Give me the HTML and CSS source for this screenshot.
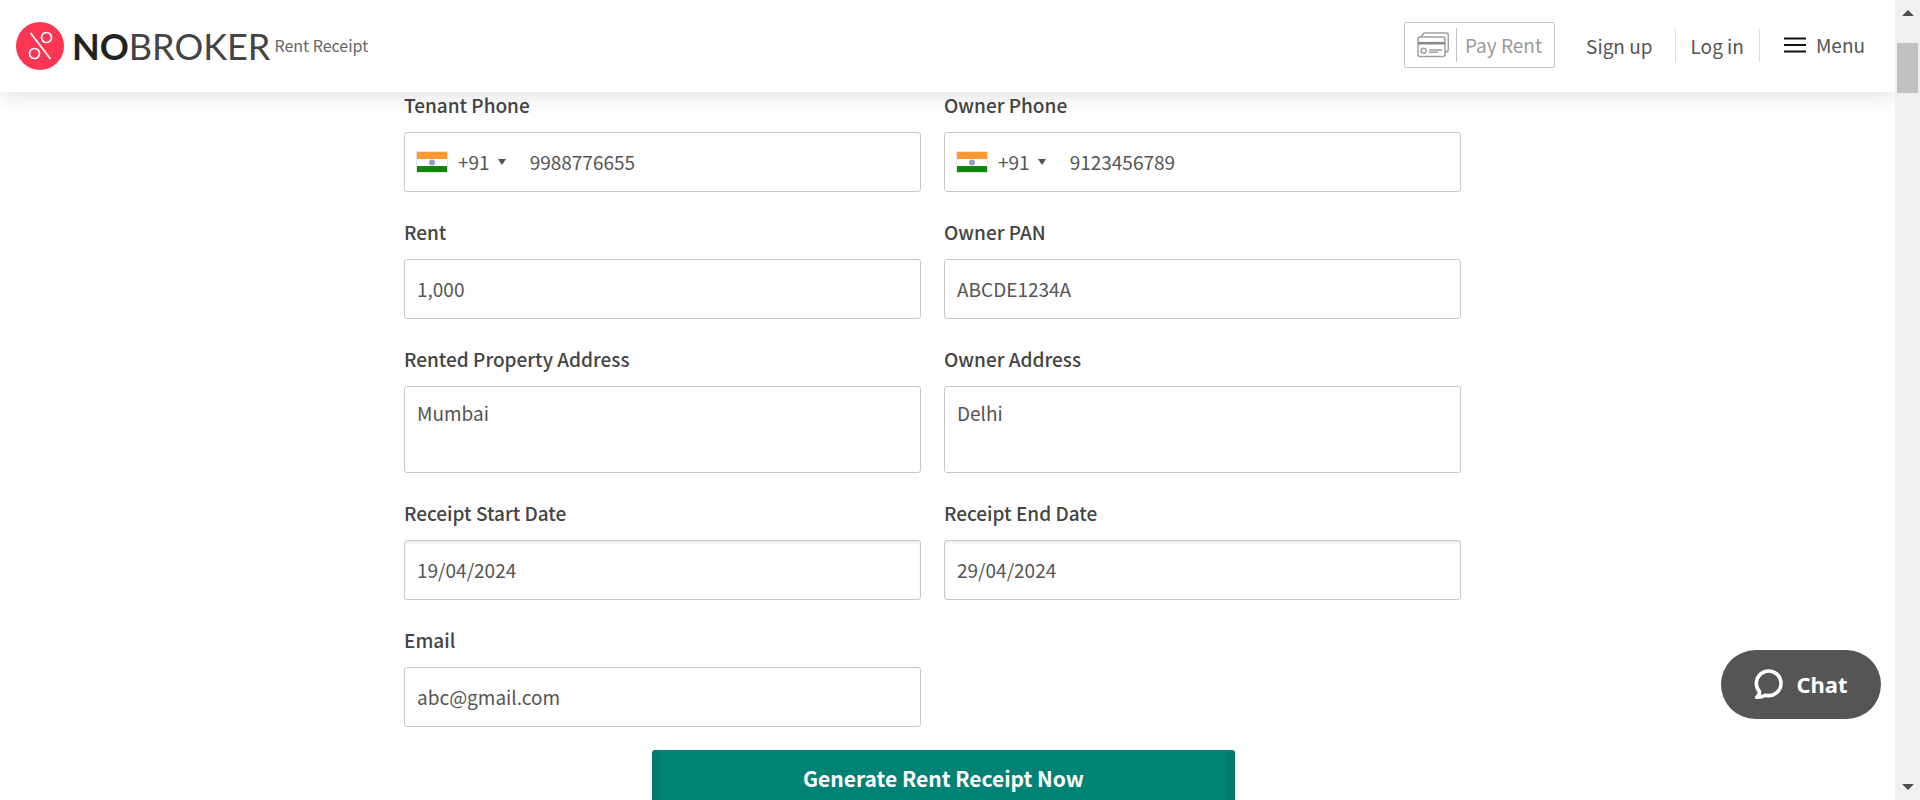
FILE: index.html
```html
<!DOCTYPE html>
<html lang="en">
<head>
<meta charset="utf-8">
<meta name="viewport" content="width=device-width, initial-scale=1">
<title>Rent Receipt</title>
<link rel="stylesheet" href="styles.css">
</head>
<body>
<div class="page">
  <header class="header">
    <a class="brand" href="#">
      <svg class="brand-mark" viewBox="0 0 48 48" aria-hidden="true">
        <circle cx="24" cy="24" r="24" fill="#fd3753"/>
        <g fill="none" stroke="#fff" stroke-width="1.7">
          <path d="M14.5 11 34.5 37"/>
          <circle cx="30.5" cy="15.500" r="5"/>
          <circle cx="18.500" cy="31.500" r="5"/>
        </g>
      </svg>
      <span class="brand-name"><b>NO</b>BROKER</span>
    </a>
    <span class="section-name">Rent Receipt</span>
    <nav class="nav">
      <a class="pay" href="#">
        <svg class="pay-icon" viewBox="0 0 32 26" fill="none" stroke="#a0a0a0" stroke-width="1.5" aria-hidden="true">
          <path d="M4 5 6.500 1.500Q7 1 8 1H29.500Q31.300 1 31.300 3V17.500Q31.300 20 28 20"/>
          <rect x="1" y="5" width="27" height="19.500" rx="2"/>
          <path d="M1 11.200H28" stroke="#888" stroke-width="2.600"/>
          <circle cx="6.500" cy="18.700" r="2.500"/>
          <path d="M12 18H25M12 20.300H21"/>
        </svg>
        <span class="pay-text">Pay Rent</span>
      </a>
      <a class="nav-link nav-signup" href="#">Sign up</a>
      <a class="nav-link nav-login" href="#">Log in</a>
      <button class="menu" type="button">
        <svg class="menu-icon" viewBox="0 0 22 16" aria-hidden="true"><path d="M0 1.500H22M0 8H22M0 14.500H22" stroke="#111" stroke-width="2"/></svg>
        Menu
      </button>
    </nav>
  </header>

  <main class="main">
    <form class="form">
      <div class="fields">
        <div class="field">
          <label class="label" for="tenant-phone">Tenant Phone</label>
          <div class="control phone">
            <button class="country" type="button" aria-label="Country code +91">
              <svg class="flag" viewBox="0 0 32 22" aria-hidden="true"><rect width="32" height="22" fill="#e4e4e4"/><path fill="#ff9933" d="M1 1h30v7H1z"/><path fill="#fff" d="M1 8h30v7H1z"/><path fill="#128807" d="M1 15h30v6H1z"/><circle cx="16" cy="11.500" r="3" fill="#8f9fcb"/></svg>
              <span>+91</span>
              <svg class="caret" viewBox="0 0 8 6" aria-hidden="true"><path fill="#555" d="M0 0h8L4 6z"/></svg>
            </button>
            <input class="phone-input" id="tenant-phone" type="tel" value="9988776655">
          </div>
        </div>
        <div class="field">
          <label class="label" for="owner-phone">Owner Phone</label>
          <div class="control phone">
            <button class="country" type="button" aria-label="Country code +91">
              <svg class="flag" viewBox="0 0 32 22" aria-hidden="true"><rect width="32" height="22" fill="#e4e4e4"/><path fill="#ff9933" d="M1 1h30v7H1z"/><path fill="#fff" d="M1 8h30v7H1z"/><path fill="#128807" d="M1 15h30v6H1z"/><circle cx="16" cy="11.500" r="3" fill="#8f9fcb"/></svg>
              <span>+91</span>
              <svg class="caret" viewBox="0 0 8 6" aria-hidden="true"><path fill="#555" d="M0 0h8L4 6z"/></svg>
            </button>
            <input class="phone-input" id="owner-phone" type="tel" value="9123456789">
          </div>
        </div>
        <div class="field">
          <label class="label" for="rent">Rent</label>
          <input class="control" id="rent" type="text" value="1,000">
        </div>
        <div class="field">
          <label class="label" for="pan">Owner PAN</label>
          <input class="control" id="pan" type="text" value="ABCDE1234A">
        </div>
        <div class="field">
          <label class="label" for="property-address">Rented Property Address</label>
          <textarea class="control area" id="property-address">Mumbai</textarea>
        </div>
        <div class="field">
          <label class="label" for="owner-address">Owner Address</label>
          <textarea class="control area" id="owner-address">Delhi</textarea>
        </div>
        <div class="field">
          <label class="label" for="start-date">Receipt Start Date</label>
          <input class="control date" id="start-date" type="text" value="19/04/2024">
        </div>
        <div class="field">
          <label class="label" for="end-date">Receipt End Date</label>
          <input class="control date" id="end-date" type="text" value="29/04/2024">
        </div>
        <div class="field">
          <label class="label" for="email">Email</label>
          <input class="control" id="email" type="email" value="abc@gmail.com">
        </div>
      </div>
      <div class="actions">
        <button class="submit" type="button">Generate Rent Receipt Now</button>
      </div>
    </form>
  </main>

  <button class="chat" type="button">
    <svg class="chat-icon" viewBox="0 0 30 32" fill="none" stroke="#fff" stroke-width="3.600" stroke-linejoin="round" aria-hidden="true"><path d="M5.500 23.500A12.300 12.300 0 1 1 11.500 27.200Q7 29.600 2.600 29.200 5.800 27 5.500 23.500Z"/></svg>
    Chat
  </button>
</div>
<div class="scrollbar" aria-hidden="true">
  <svg class="arrow" viewBox="0 0 12 6"><path fill="#505050" d="M0 6 6 0l6 6z"/></svg>
  <div class="track"><div class="thumb"></div></div>
  <svg class="arrow" viewBox="0 0 12 6"><path fill="#505050" d="M0 0h12L6 6z"/></svg>
</div>
</body>
</html>
```
FILE: styles.css
```css
* {
  box-sizing: border-box;
}

body {
  margin: 0;
  display: flex;
  height: 100vh;
  overflow: hidden;
  background: #fff;
  color: #555;
  font: 19px/28px "Noto Sans CJK SC", "Noto Sans", sans-serif;
}

button,
input,
textarea {
  font: inherit;
  color: inherit;
}

a {
  color: inherit;
  text-decoration: none;
}

svg {
  display: block;
  flex: none;
}

.page {
  position: relative;
  flex: 1;
  min-width: 0;
  overflow: hidden;
}

/* Header */
.header {
  position: relative;
  z-index: 2;
  display: flex;
  align-items: center;
  height: 92px;
  padding: 0 30px 0 16px;
  background: #fff;
  box-shadow: 0 4px 20px rgba(0, 0, 0, 0.12);
}

.brand {
  display: flex;
  align-items: center;
  gap: 8px;
}

.brand-mark {
  width: 48px;
  height: 48px;
}

.brand-name {
  color: #444;
  font: 36px/48px Lato, sans-serif;
}

.brand-name b {
  color: #222;
  font-weight: 700;
}

.section-name {
  margin-left: 4px;
  padding-bottom: 3px;
  font-size: 16px;
  color: #666;
}

.nav {
  display: flex;
  align-items: center;
  margin-left: auto;
  padding-bottom: 2px;
}

.pay {
  display: flex;
  align-items: center;
  gap: 7px;
  height: 46px;
  padding: 0 12px;
  border: 1px solid #c4c4c4;
  border-radius: 2px;
  color: #999;
}

.pay-icon {
  width: 32px;
  height: 26px;
}

.pay-text {
  padding-left: 8px;
  border-left: 1px solid #c4c4c4;
  line-height: 34px;
}

.nav-link {
  line-height: 33px;
  border-right: 1px solid #ddd;
}

.nav-signup {
  padding: 0 22px 0 31px;
}

.nav-login {
  padding: 0 15px;
}

.menu {
  display: flex;
  align-items: center;
  gap: 10px;
  margin-left: 24px;
  padding: 0;
  border: 0;
  background: none;
}

.menu-icon {
  width: 22px;
  height: 16px;
}

/* Form */
.form {
  max-width: 1087px;
  margin: 0 auto;
}

.fields {
  display: grid;
  grid-template-columns: 1fr 1fr;
  gap: 27px 23px;
  padding-right: 30px;
}

.field {
  display: flex;
  flex-direction: column;
  gap: 14px;
}

.label {
  color: #444;
  font-weight: 500;
  line-height: 26px;
}

.control {
  width: 100%;
  height: 60px;
  padding: 0 12px 2px;
  border: 1px solid #c8c8c8;
  border-radius: 3px;
  background: #fff;
  outline: none;
}

.area {
  display: block;
  height: 87px;
  padding-top: 12px;
  resize: none;
}

.date {
  box-shadow: inset 0 2px 2px rgba(0, 0, 0, 0.08);
}

.phone {
  display: flex;
  align-items: center;
  gap: 24px;
  padding: 0 11px;
}

.country {
  display: flex;
  align-items: center;
  gap: 10px;
  padding: 0;
  border: 0;
  background: none;
}

.flag {
  width: 32px;
  height: 22px;
}

.caret {
  width: 8px;
  height: 6px;
  margin-left: -2px;
}

.phone-input {
  flex: 1;
  min-width: 0;
  padding: 0;
  border: 0;
  background: none;
  outline: none;
}

.actions {
  display: flex;
  justify-content: center;
  padding: 23px 8px 30px 0;
}

.submit {
  width: 583px;
  height: 57px;
  padding: 0 0 2px;
  border: solid #007a6c;
  border-width: 0 8px;
  border-radius: 3px;
  background: #008375;
  color: #fff;
  font-size: 21px;
  font-weight: 700;
}

/* Chat launcher */
.chat {
  position: absolute;
  right: 14px;
  bottom: 81px;
  z-index: 3;
  display: flex;
  align-items: center;
  justify-content: center;
  gap: 12px;
  width: 160px;
  height: 69px;
  padding: 0 0 2px;
  border: 0;
  border-radius: 35px;
  background: #555;
  color: #fff;
  font: bold 22px/30px "Noto Sans", sans-serif;
}

.chat-icon {
  width: 30px;
  height: 32px;
}

/* Scrollbar */
.scrollbar {
  display: flex;
  flex-direction: column;
  align-items: center;
  width: 25px;
  padding: 10px 0;
  background: #f0f0f0;
}

.track {
  flex: 1;
  padding-top: 27px;
}

.thumb {
  width: 21px;
  height: 50px;
  background: #c1c1c1;
}

.arrow {
  width: 12px;
  height: 6px;
}
```
